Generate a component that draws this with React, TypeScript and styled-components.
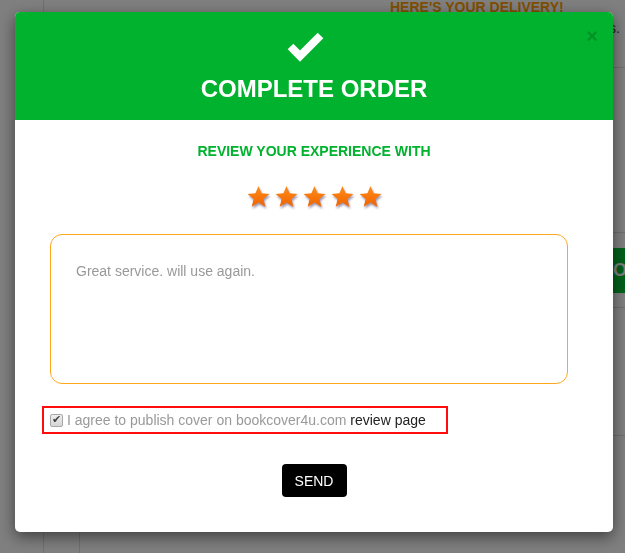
import React from "react";
import styled, { createGlobalStyle } from "styled-components";

const GlobalStyle = createGlobalStyle`
  html, body { margin: 0; padding: 0; }
  body {
    font-family: "Liberation Sans", Arial, sans-serif;
    background: #fff;
    overflow: hidden;
  }
  * { box-sizing: border-box; }
`;

/* ---------- background page ---------- */
const Page = styled.div`
  display: flex;
  width: 625px;
  height: 553px;
  overflow: hidden;
  background: #fff;
`;

const Sidebar = styled.aside`
  width: 44px;
  flex-shrink: 0;
  border-right: 1px solid #e0e0e0;
`;

const Main = styled.main`
  flex: 1;
  display: flex;
  flex-direction: column;
  min-width: 0;
`;

const TopBlock = styled.section`
  height: 68px;
  border-bottom: 1px solid #e0e0e0;
  padding-left: 346px;
`;

const DeliveryTitle = styled.h2`
  margin: 0;
  font-size: 14px;
  line-height: 14px;
  font-weight: bold;
  color: #ff9d00;
  white-space: nowrap;
`;

const DeliveryText = styled.p`
  margin: 6px 0 0;
  font-size: 14px;
  line-height: 16px;
  color: #444;
  text-align: right;
  padding-right: 5px;
  white-space: nowrap;
`;

const Block = styled.section<{ $h: number }>`
  height: ${(p) => p.$h}px;
  border-bottom: 1px solid #e0e0e0;
  flex-shrink: 0;
`;

const ButtonRow = styled.section`
  height: 75px;
  border-bottom: 1px solid #e0e0e0;
  padding: 15px 0 0 556px;
  flex-shrink: 0;
`;

const BgButton = styled.div`
  height: 45px;
  background: #00c332;
  color: #fff;
  font-size: 18px;
  font-weight: bold;
  line-height: 45px;
  padding-left: 13px;
  white-space: nowrap;
  width: 200px;
`;

const Footer = styled.section`
  flex: 1;
  margin-left: 35px;
  border-left: 1px solid #e0e0e0;
`;

/* ---------- modal ---------- */
const Backdrop = styled.div`
  position: fixed;
  inset: 0;
  background: rgba(0, 0, 0, 0.5);
  padding: 12px 0 0 15px;
  display: flex;
  align-items: flex-start;
`;

const Modal = styled.div`
  position: relative;
  width: 598px;
  height: 520px;
  background: #fff;
  border-radius: 5px;
  overflow: hidden;
  box-shadow: 0 5px 15px rgba(0, 0, 0, 0.5);
  display: flex;
  flex-direction: column;
`;

const Header = styled.header`
  height: 108px;
  background: #00b22d;
  display: flex;
  flex-direction: column;
  align-items: center;
  padding-top: 19px;
`;

const CheckIcon = styled.svg`
  display: block;
  margin-right: 20px;
`;

const Title = styled.h1`
  margin: 12px 0 0;
  font-size: 24px;
  line-height: 28px;
  font-weight: bold;
  color: #fff;
`;

const Close = styled.button`
  position: absolute;
  top: 14px;
  right: 15px;
  border: 0;
  background: transparent;
  padding: 0;
  font-family: "Liberation Sans", Arial, sans-serif;
  font-size: 20px;
  font-weight: bold;
  line-height: 1;
  color: #000;
  opacity: 0.18;
  cursor: pointer;
`;

const Body = styled.div`
  flex: 1;
  display: flex;
  flex-direction: column;
  padding-top: 22px;
`;

const Subtitle = styled.h3`
  margin: 0;
  text-align: center;
  font-size: 14px;
  line-height: 18px;
  font-weight: bold;
  color: #00b22d;
`;

const Stars = styled.div`
  display: flex;
  justify-content: center;
  gap: 5px;
  margin-top: 25px;
  height: 26px;
`;

const StarSvg = styled.svg`
  display: block;
  filter: drop-shadow(1px 2px 1px rgba(60, 40, 90, 0.5));
`;

const Review = styled.textarea`
  display: block;
  margin: 23px 0 0 35px;
  width: 518px;
  height: 150px;
  border: 1px solid #ffa81f;
  border-radius: 12px;
  padding: 27px 25px;
  font-family: "Liberation Sans", Arial, sans-serif;
  font-size: 14px;
  line-height: 18px;
  color: #999;
  resize: none;
  outline: none;
`;

const Agree = styled.label`
  display: flex;
  align-items: center;
  gap: 4px;
  margin: 22px 0 0 27px;
  width: 406px;
  height: 28px;
  border: 2px solid #ff0d0d;
  padding-left: 6px;
  font-size: 14px;
  color: #999;
  white-space: nowrap;
`;

const Box = styled.input`
  appearance: none;
  margin: 0;
  width: 13px;
  height: 13px;
  border: 1px solid #a8a8a8;
  border-radius: 2px;
  background: linear-gradient(#eee, #d4d4d4);
  position: relative;
  flex-shrink: 0;
  &::after {
    content: "✔";
    position: absolute;
    left: 1px;
    top: -2px;
    font-size: 11px;
    color: #444;
  }
`;

const Link = styled.span`
  color: #222;
`;

const Send = styled.button`
  align-self: center;
  margin-top: 30px;
  height: 33px;
  width: 65px;
  border: 0;
  border-radius: 4px;
  background: #000;
  color: #fff;
  font-family: "Liberation Sans", Arial, sans-serif;
  font-size: 14px;
  padding: 0;
  cursor: pointer;
`;

const Star = () => (
  <StarSvg width="23" height="24" viewBox="0 0 24 24">
    <defs>
      <linearGradient id="sg" x1="0" y1="0" x2="0" y2="1">
        <stop offset="0" stopColor="#ff8c1a" />
        <stop offset="1" stopColor="#f06400" />
      </linearGradient>
    </defs>
    <polygon
      points="12,0.5 15.2,8.2 23.4,8.8 17.1,14.1 19.1,22.2 12,17.8 4.9,22.2 6.9,14.1 0.6,8.8 8.8,8.2"
      fill="url(#sg)"
    />
  </StarSvg>
);

export default function App() {
  return (
    <>
      <GlobalStyle />
      <Page>
        <Sidebar />
        <Main>
          <TopBlock>
            <DeliveryTitle>HERE'S YOUR DELIVERY!</DeliveryTitle>
            <DeliveryText>Thank you for choosing our services.</DeliveryText>
          </TopBlock>
          <Block $h={165} />
          <ButtonRow>
            <BgButton>ORDER</BgButton>
          </ButtonRow>
          <Block $h={128} />
          <Footer />
        </Main>
      </Page>
      <Backdrop>
        <Modal>
          <Header>
            <CheckIcon width="40" height="32" viewBox="0 0 40 32">
              <polyline
                points="6.5,15.5 16,25 36.5,4.5"
                fill="none"
                stroke="#fff"
                strokeWidth="8"
                strokeLinejoin="miter"
                strokeLinecap="butt"
              />
            </CheckIcon>
            <Title>COMPLETE ORDER</Title>
          </Header>
          <Close aria-label="Close">×</Close>
          <Body>
            <Subtitle>REVIEW YOUR EXPERIENCE WITH</Subtitle>
            <Stars>
              <Star />
              <Star />
              <Star />
              <Star />
              <Star />
            </Stars>
            <Review defaultValue="Great service. will use again." />
            <Agree>
              <Box type="checkbox" defaultChecked />
              <span>
                I agree to publish cover on bookcover4u.com <Link>review page</Link>
              </span>
            </Agree>
            <Send>SEND</Send>
          </Body>
        </Modal>
      </Backdrop>
    </>
  );
}
